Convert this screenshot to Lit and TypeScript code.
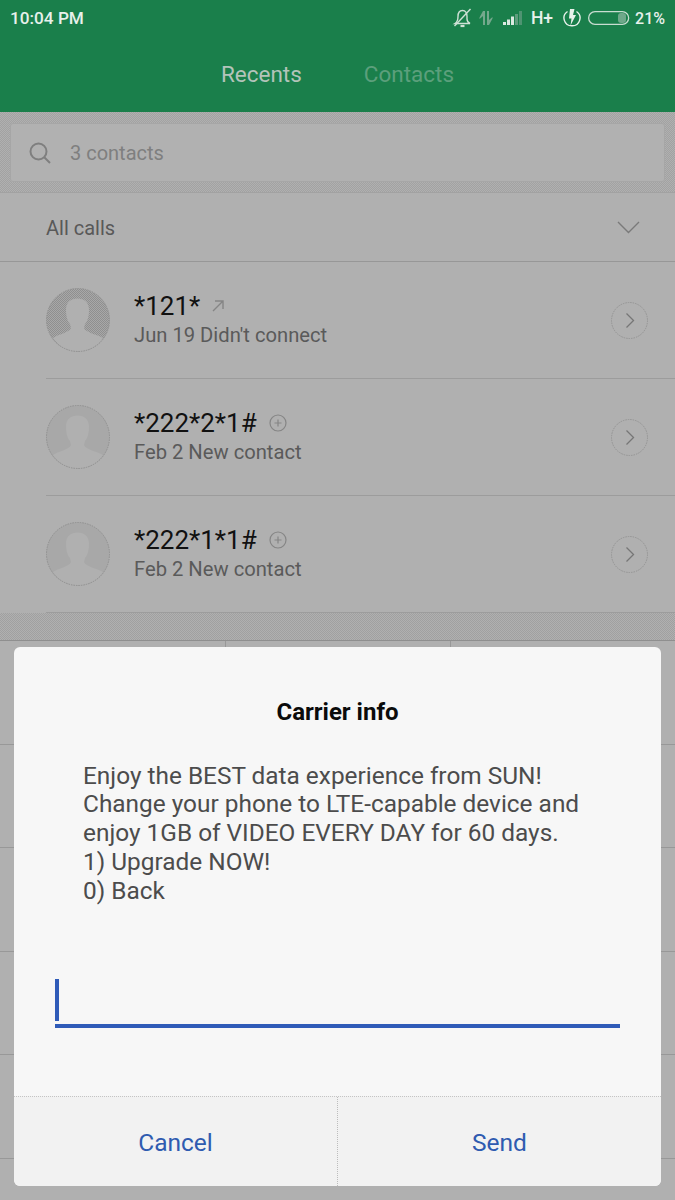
import { LitElement, html, css, svg } from "lit";
import { customElement } from "lit/decorators.js";

const CALLS = [
  { name: "*121*", sub: "Jun 19 Didn't connect", kind: "out", dark: true },
  { name: "*222*2*1#", sub: "Feb 2 New contact", kind: "add", dark: false },
  { name: "*222*1*1#", sub: "Feb 2 New contact", kind: "add", dark: false },
];

const avatar = (dark: boolean) => html`
  <svg class="avatar" width="64" height="64" viewBox="0 0 64 64">
    <defs>
      <pattern id="dots" width="2" height="2" patternUnits="userSpaceOnUse">
        <rect width="2" height="2" fill="#a8a8a8" />
        <rect width="1" height="1" fill="#8f8f8f" />
        <rect x="1" y="1" width="1" height="1" fill="#8f8f8f" />
      </pattern>
    </defs>
    <circle cx="32" cy="32" r="31.5" fill=${dark ? "url(#dots)" : "#a8a8a8"} />
    <path
      d="M7 50C12 46 23 45 25 40L24 36C21 33 20 27 20 22C20 14 25 10.500 31.500 10.500C38 10.500 43 14 43 22C43 27 42 33 39 36L38 40C40 45 51 46 57 50C51 59 42 63.500 32 63.500C22 63.500 13 59 7 50Z"
      fill="#b0b0b0"
    />
    <circle cx="32" cy="32" r="31.5" fill="none" stroke="#8f8f8f" stroke-width="1" stroke-dasharray="1.5 1" />
  </svg>
`;

const outIcon = svg`<svg class="tag" width="12" height="12" viewBox="0 0 12 12" fill="none" stroke="#858585" stroke-width="1.400"><path d="M1 11L11 1M3 1H11V9" /></svg>`;
const addIcon = svg`<svg class="tag" width="18" height="18" viewBox="0 0 18 18" fill="none" stroke="#858585" stroke-width="1.200"><circle cx="9" cy="9" r="8" /><path d="M9 5.500V12.500M5.500 9H12.500" /></svg>`;

@customElement("app-root")
export class AppRoot extends LitElement {
  static styles = css`
    :host {
      display: block;
      width: 675px;
      height: 1200px;
      position: relative;
      overflow: hidden;
      background: #b0b0b0;
      font-family: Roboto, "Liberation Sans", sans-serif;
    }
    .top {
      height: 112px;
      background: #1a7f4b;
      box-sizing: border-box;
      color: #e8f1eb;
    }
    .status {
      height: 36px;
      display: flex;
      align-items: center;
      justify-content: space-between;
      padding: 0 10px;
      font-size: 17.200px;
      font-weight: 500;
    }
    .status-right {
      display: flex;
      align-items: center;
    }
    .status-right svg {
      display: block;
    }
    .hplus {
      font-size: 17.500px;
      margin: 0 9px 0 8px;
    }
    .pct {
      font-size: 16px;
      margin-left: 5px;
    }
    .tabs {
      display: flex;
      justify-content: center;
      gap: 62px;
      padding-top: 25px;
      font-size: 22.500px;
      line-height: 27px;
    }
    .tab-on {
      color: #b3c4ba;
    }
    .tab-off {
      color: #5c9f7c;
    }
    .search-wrap {
      height: 81px;
      box-sizing: border-box;
      padding: 11px 10px 0;
      background: conic-gradient(#a2a2a2 25%, #b0b0b0 0 50%, #a2a2a2 0 75%, #b0b0b0 0) 0 0 / 2px 2px;
      border-bottom: 1px solid #a2a2a2;
    }
    .search {
      height: 59px;
      box-sizing: border-box;
      border: 1px solid #a6a6a6;
      border-radius: 3px;
      background: #b1b1b1;
      display: flex;
      align-items: center;
      padding-left: 18px;
      gap: 19px;
      font-size: 20px;
      color: #7f7f7f;
    }
    .filter {
      height: 69px;
      box-sizing: border-box;
      border-bottom: 1px solid #979797;
      display: flex;
      align-items: center;
      justify-content: space-between;
      padding: 2px 35px 0 46px;
      font-size: 20px;
      color: #595959;
    }
    .filter svg {
      margin-top: -2px;
    }
    .row {
      height: 116px;
      margin-left: 46px;
      padding-right: 27px;
      border-bottom: 1px solid #9c9c9c;
      display: flex;
      align-items: center;
    }
    .avatar {
      flex: none;
    }
    .info {
      flex: 1;
      margin-left: 24px;
      padding-bottom: 3px;
    }
    .name {
      display: flex;
      align-items: center;
      font-size: 26px;
      line-height: 32px;
      color: #111;
    }
    .tag {
      margin-left: 12px;
    }
    .sub {
      font-size: 20.200px;
      line-height: 26px;
      color: #5a5a5a;
    }
    .go {
      flex: none;
      width: 37px;
      height: 37px;
    }
    .hatch {
      height: 27px;
      background: conic-gradient(#a0a0a0 25%, #b0b0b0 0 50%, #a0a0a0 0 75%, #b0b0b0 0) 0 0 / 2px 2px;
      border-bottom: 1px solid #8f8f8f;
    }
    .keypad {
      display: grid;
      grid-template-columns: repeat(3, 225px);
      grid-auto-rows: 103.500px;
    }
    .key {
      box-sizing: border-box;
      border-bottom: 1px solid #989898;
      border-left: 1px solid #989898;
    }
    .key:nth-child(3n + 1) {
      border-left: none;
    }
    .dialog {
      position: absolute;
      left: 14px;
      top: 647px;
      width: 647px;
      height: 539px;
      border-radius: 6px;
      overflow: hidden;
      background: #f7f7f7;
      display: flex;
      flex-direction: column;
    }
    .title {
      margin-top: 51px;
      text-align: center;
      font-size: 24px;
      line-height: 28px;
      font-weight: 700;
      color: #0b0b0b;
    }
    .msg {
      margin: 35.500px 0 0 69px;
      font-size: 24.400px;
      line-height: 28.800px;
      color: #4c4c4c;
      white-space: pre;
    }
    .field {
      margin: 74px 41px 0;
      height: 45px;
      border-bottom: 4px solid #2f5bb8;
    }
    .caret {
      width: 4px;
      height: 42px;
      background: #2f5bb8;
    }
    .actions {
      margin-top: auto;
      height: 89px;
      display: flex;
      background: #f2f2f2;
      border-top: 1px dotted #c4c4c4;
    }
    .action {
      flex: 1;
      display: flex;
      align-items: center;
      justify-content: center;
      padding-top: 2px;
      font-size: 24.500px;
      color: #2f5bb0;
    }
    .action + .action {
      border-left: 1px dotted #bdbdbd;
    }
  `;

  render() {
    return html`
      <div class="top">
        <div class="status">
          <span>10:04 PM</span>
          <div class="status-right">
            <svg width="20" height="20" viewBox="0 0 20 20" fill="none" stroke="#cfe1d6" stroke-width="1.400">
              <path d="M3 15.500C5.500 14 6 11 6 8.500C6 5 7.500 2.500 10.500 2.500C13.500 2.500 15 5 15 8.500V11C15 13 16 14.500 18 15.500H3Z" />
              <path d="M2.500 18L18.500 1" />
              <path d="M8.500 18H12.500" stroke-width="2.200" />
            </svg>
            <svg style="margin-left:6px" width="16" height="18" viewBox="0 0 16 18" fill="#74a88c">
              <path d="M5 2H7V16H5V7L1.500 10V8.500ZM9 2H11V11L14.500 8V9.500L11 16H9Z" />
            </svg>
            <svg style="margin-left:9px" width="20" height="14" viewBox="0 0 20 14">
              <rect x="0" y="11" width="3" height="3" fill="#dce9e1" />
              <rect x="4" y="8.500" width="3" height="5.500" fill="#dce9e1" />
              <rect x="8" y="5.500" width="3" height="8.500" fill="#dce9e1" />
              <rect x="12" y="3" width="3" height="11" fill="#5f9c7d" />
              <rect x="16" y="0" width="3" height="14" fill="#4f9472" />
            </svg>
            <span class="hplus">H+</span>
            <svg width="20" height="20" viewBox="0 0 20 20" fill="none" stroke="#e8f1eb" stroke-width="1.400">
              <path d="M5.500 3.500A7.800 7.800 0 0 0 10 17.800A7.800 7.800 0 0 0 14.500 3.500" />
              <path d="M8 1H12.500L11 7H14L8.500 17.500L9.500 10.500H7Z" fill="#e8f1eb" stroke="none" />
            </svg>
            <svg style="margin-left:6px" width="42" height="14" viewBox="0 0 42 14">
              <rect x="0.650" y="0.650" width="40" height="12.700" rx="6.350" fill="none" stroke="#c9ddd1" stroke-width="1.300" />
              <rect x="30" y="2" width="8" height="10" rx="3" fill="#6fa88a" />
            </svg>
            <span class="pct">21%</span>
          </div>
        </div>
        <div class="tabs">
          <span class="tab-on">Recents</span>
          <span class="tab-off">Contacts</span>
        </div>
      </div>

      <div class="search-wrap">
        <div class="search">
          <svg width="22" height="22" viewBox="0 0 22 22" fill="none" stroke="#7f7f7f" stroke-width="2">
            <circle cx="9.500" cy="9.500" r="8" />
            <path d="M15 15L21 21" />
          </svg>
          <span>3 contacts</span>
        </div>
      </div>

      <div class="filter">
        <span>All calls</span>
        <svg width="23" height="13" viewBox="0 0 23 13" fill="none" stroke="#7a7a7a" stroke-width="1.400">
          <path d="M1 1L11.500 11.500L22 1" />
        </svg>
      </div>

      ${CALLS.map(
        (c) => html`
          <div class="row">
            ${avatar(c.dark)}
            <div class="info">
              <div class="name">${c.name}${c.kind === "out" ? outIcon : addIcon}</div>
              <div class="sub">${c.sub}</div>
            </div>
            <svg class="go" viewBox="0 0 37 37" fill="none">
              <circle cx="18.500" cy="18.500" r="18" stroke="#949494" stroke-dasharray="1.500 1" />
              <path d="M15.500 11.500L22.500 18.500L15.500 25.500" stroke="#767676" stroke-width="1.300" />
            </svg>
          </div>
        `
      )}

      <div class="hatch"></div>
      <div class="keypad">
        ${Array.from({ length: 15 }).map(() => html`<div class="key"></div>`)}
      </div>

      <div class="dialog">
        <div class="title">Carrier info</div>
        <div class="msg">Enjoy the BEST data experience from SUN!
Change your phone to LTE-capable device and
enjoy 1GB of VIDEO EVERY DAY for 60 days.
1) Upgrade NOW!
0) Back</div>
        <div class="field"><div class="caret"></div></div>
        <div class="actions">
          <div class="action">Cancel</div>
          <div class="action">Send</div>
        </div>
      </div>
    `;
  }
}
